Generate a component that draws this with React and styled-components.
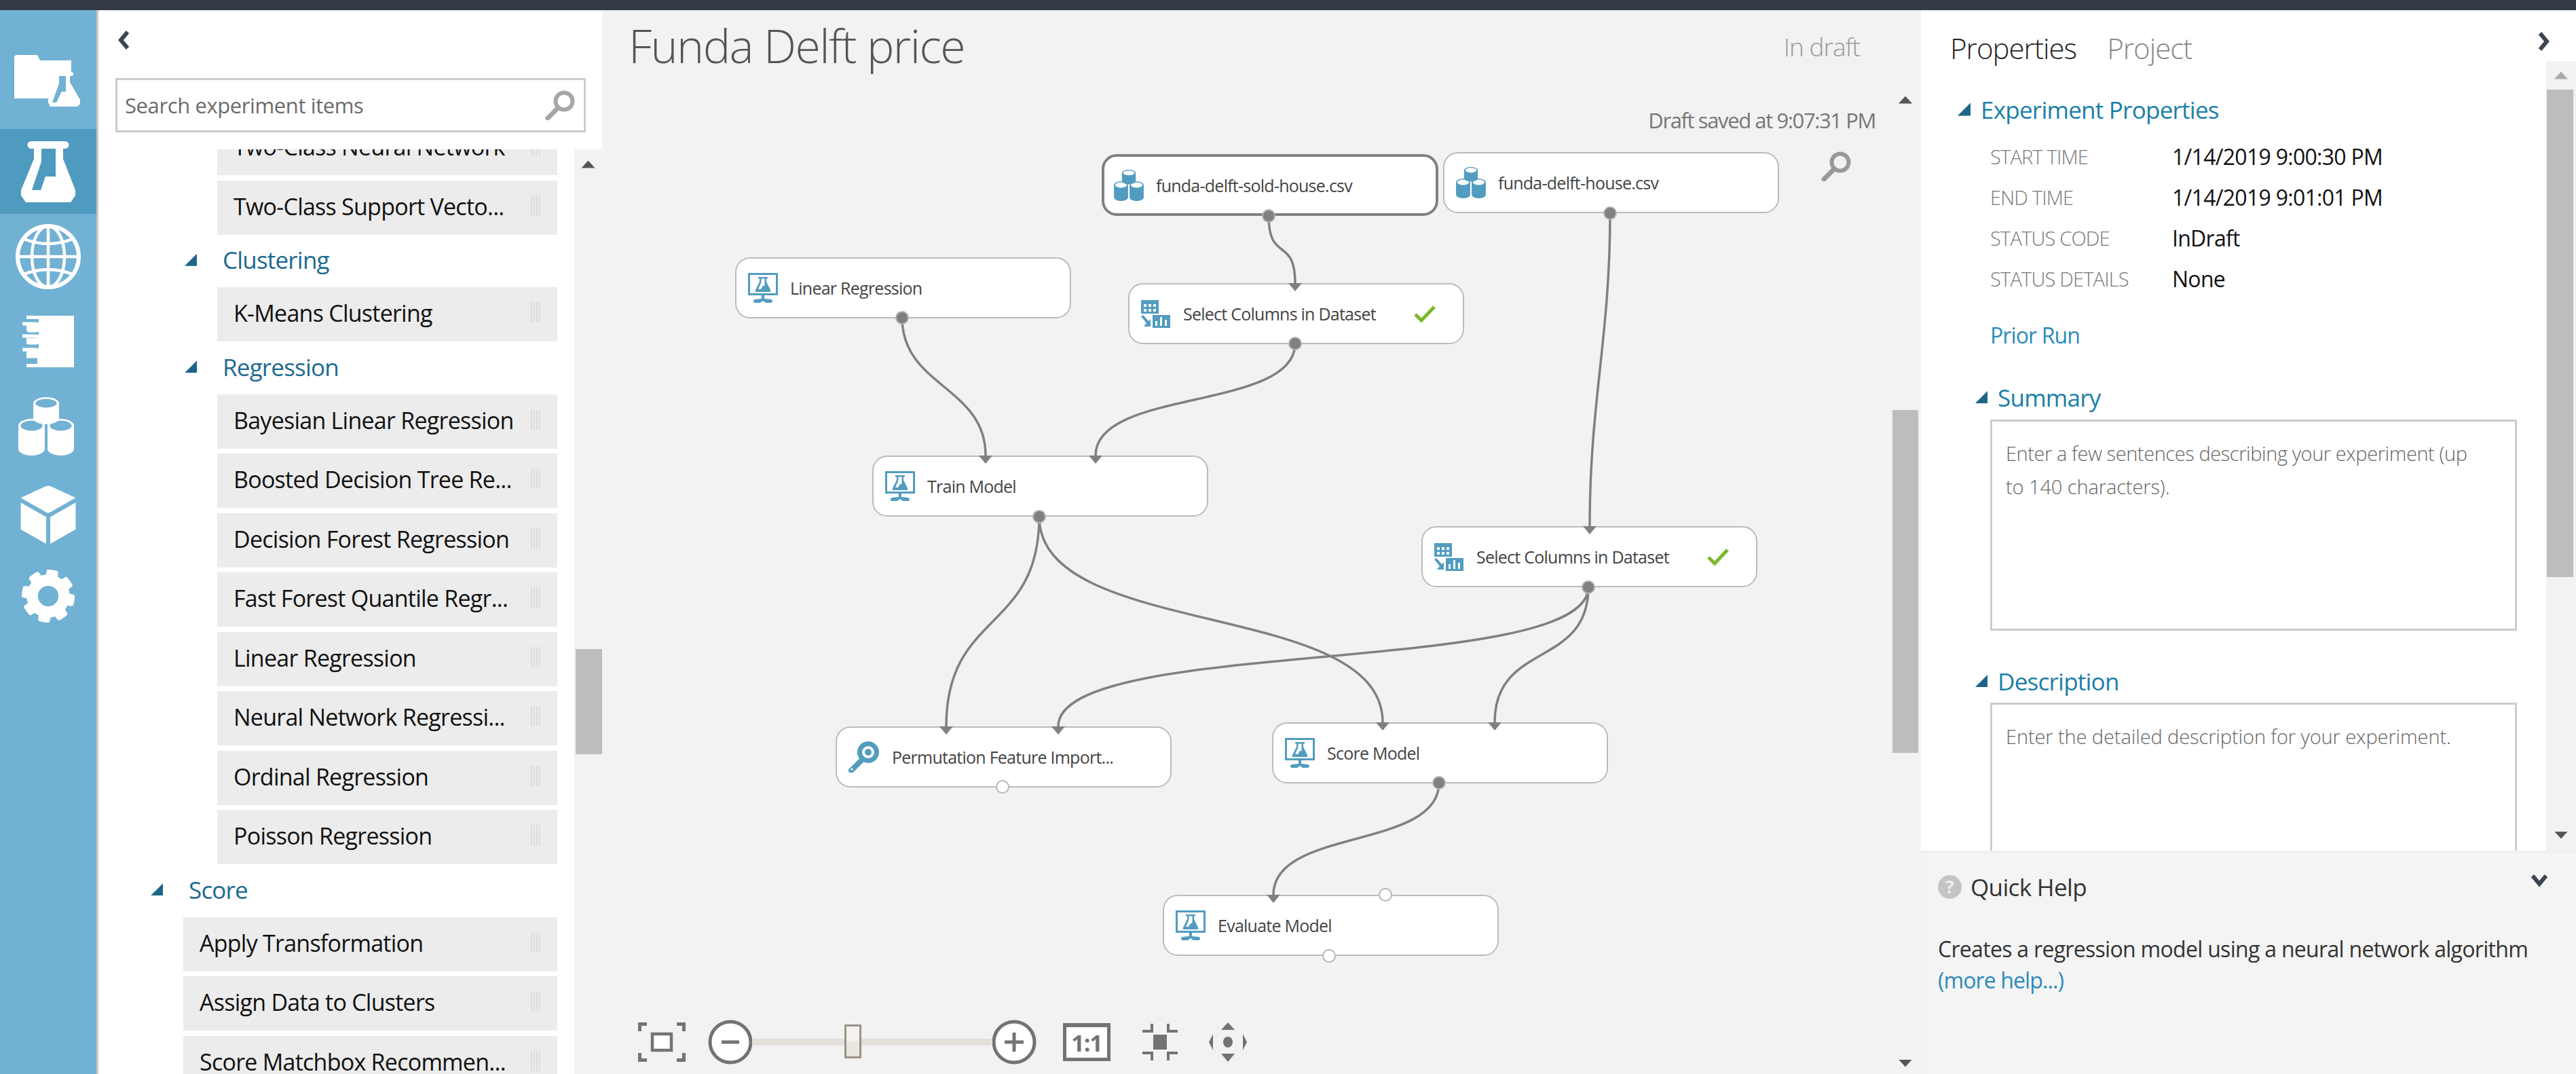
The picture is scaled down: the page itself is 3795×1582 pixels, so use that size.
import React from "react";
import styled, { createGlobalStyle } from "styled-components";

const FONT = `"Open Sans", "Noto Sans", "Liberation Sans", sans-serif`;

const Global = createGlobalStyle`
  html, body { margin: 0; padding: 0; background: #f2f2f2; }
  * { box-sizing: border-box; }
  body { font-family: ${FONT}; }
`;

const Page = styled.div`
  width: 3795px; height: 1582px; display: flex; flex-direction: column; overflow: hidden;
`;
const TopBar = styled.div`height: 15px; flex: none; background: #343a45;`;
const Main = styled.div`flex: 1; display: flex; min-height: 0;`;

/* Left nav */
const Nav = styled.nav`
  width: 145px; flex: none; background: #71b1d3; border-right: 3px solid #c6c6c6;
  padding-top: 50px; display: flex; flex-direction: column;
`;
const NavItem = styled.div`
  height: 125px; display: flex; align-items: center; justify-content: center;
  background: ${p => (p.$active ? "#4f9abf" : "transparent")};
  & > svg { display: block; transform: translate(${p => p.$dx || 0}px, ${p => p.$dy || 0}px); }
`;

/* Palette */
const Palette = styled.aside`
  width: 742px; flex: none; background: #fff; display: flex; flex-direction: column; min-height: 0;
`;
const PaletteHead = styled.div`height: 100px; flex: none; padding: 30px 0 0 27px;`;
const SearchBox = styled.div`
  height: 80px; width: 693px; margin-left: 25px; flex: none; border: 3px solid #ccc;
  display: flex; align-items: center; padding: 0 13px 0 11px; background: #fff;
`;
const SearchInput = styled.input`
  flex: 1; min-width: 0; border: 0; outline: 0; background: transparent; font-family: ${FONT};
  font-size: 31px; letter-spacing: -0.4px; color: #666; padding: 0;
  &::placeholder { color: #6b6b6b; opacity: 1; }
`;
const PaletteBody = styled.div`
  flex: 1; margin-top: 25px; display: flex; min-height: 0; overflow: hidden;
`;
const ListClip = styled.div`flex: 1; min-width: 0; overflow: hidden;`;
const List = styled.div`margin: -42px 25px 0 0; display: flex; flex-direction: column;`;
const Item = styled.div`
  height: 80px; flex: none; margin-bottom: 7.5px; margin-left: ${p => p.$indent}px; background: #ececec;
  display: flex; align-items: center; justify-content: space-between;
  padding: 0 25px 4px 24px; font-size: 34px; letter-spacing: -0.75px; color: #111; white-space: nowrap;
`;
const Grip = styled.span`
  width: 14px; height: 30px; flex: none; margin-top: -2px;
  background: repeating-linear-gradient(90deg, #dcdcdc 0 2px, #ececec 2px 4px);
`;
const GroupHead = styled.div`
  height: 77.5px; margin-top: -7.5px; padding-bottom: 3px; flex: none; display: flex; align-items: center; padding-left: ${p => p.$indent}px;
  font-size: 35px; letter-spacing: -0.8px; color: #1c6a90;
`;
const Tri = styled.span`
  width: ${p => p.$s || 18}px; height: ${p => p.$s || 18}px; flex: none; background: #1c6489;
  clip-path: polygon(100% 0, 100% 100%, 0 100%);
  margin-right: ${p => p.$gap}px;
`;

/* Scrollbars */
const Scroll = styled.div`
  width: ${p => p.$w}px; flex: none; background: #f2f2f2; display: flex; flex-direction: column;
  margin-top: ${p => p.$top || 0}px;
  min-height: 0;
`;
const ArrowCell = styled.div`
  height: ${p => p.$h}px; flex: none; display: flex; align-items: center; justify-content: center;
  padding-right: ${p => p.$pr || 0}px;
  margin-top: ${p => (p.$end ? "auto" : "0")};
`;
const Arrow = styled.span`
  width: 20px; height: 11px; background: ${p => p.$color || "#555"};
  clip-path: ${p => (p.$down ? "polygon(0 0, 100% 0, 50% 100%)" : "polygon(50% 0, 100% 100%, 0 100%)")};
`;
const Thumb = styled.div`
  height: ${p => p.$h}px; flex: none; background: #bdbdbd; margin-top: ${p => p.$top}px;
  margin-left: ${p => p.$l || 0}px; margin-right: ${p => p.$r || 0}px;
`;

/* Canvas */
const Canvas = styled.main`
  width: 1943px; flex: none; display: flex; background: #f2f2f2; min-height: 0;
`;
const Stage = styled.div`flex: 1; position: relative; overflow: hidden;`;
const TitleRow = styled.header`
  display: flex; justify-content: space-between; align-items: center;
  height: 70px; margin-top: 18px; padding: 0 48px 0 39px;
`;
const Title = styled.h1`
  margin: -4px 0 0; font-weight: 300; font-size: 68px; letter-spacing: -1.6px; color: #555;
`;
const Status = styled.span`font-size: 37px; font-weight: 300; letter-spacing: -1px; color: #999;`;
const Saved = styled.div`
  position: absolute; right: 25px; top: 141px; font-size: 31px; letter-spacing: -1.4px; color: #777;
`;
const CanvasSearch = styled.div`position: absolute; left: 1796px; top: 208px; line-height: 0;`;

const Wires = styled.svg`position: absolute; left: 0; top: 0; pointer-events: none;`;
const Node = styled.div`
  position: absolute; left: ${p => p.$x - 887}px; top: ${p => p.$y - 15}px;
  width: ${p => (p.$sel ? 496 : 495)}px; height: ${p => (p.$sel ? 91 : 90)}px;
  background: #fff; border-radius: 22px;
  border: ${p => (p.$sel ? "4px solid #808080" : "2px solid #bbb")};
  display: flex; align-items: center; padding-left: ${p => (p.$sel ? 14 : 17)}px;
  font-size: 25px; letter-spacing: -0.75px; color: #444; white-space: nowrap;
`;
const NodeLabel = styled.span`margin-left: 18px; flex: ${p => (p.$grow ? 1 : "none")};`;
const Check = styled.span`margin: 0 40px 0 0; line-height: 0; flex: none;`;

/* Canvas toolbar */
const Toolbar = styled.div`
  position: absolute; left: 53px; bottom: 14px; display: flex; align-items: center; height: 66px;
`;
const ToolIcon = styled.span`
  display: block; line-height: 0; flex: none; margin-left: ${p => p.$ml || 0}px;
`;
const SliderTrack = styled.div`
  width: 354px; height: 10px; flex: none; background: #e3dfd9; position: relative; margin: 0 -1px;
`;
const SliderThumb = styled.div`
  position: absolute; left: 136px; top: -21px; width: 25px; height: 50px; border: 3px solid #9a9288;
  background: linear-gradient(#f4f2ee 0 50%, #e9e5df 50% 100%);
`;
const OneToOne = styled.div`
  width: 70px; height: 56px; flex: none; margin-left: 39px; background: #fff; border: 5px solid #737373;
  border-top-width: 6px; display: flex; align-items: center; justify-content: center;
  font-size: 34px; font-weight: 700; letter-spacing: -1px; color: #737373; line-height: 1;
`;

/* Right panel */
const Panel = styled.section`
  flex: 1; min-width: 0; background: #fff; display: flex; flex-direction: column; min-height: 0; position: relative;
`;
const PropsArea = styled.div`height: 1238px; flex: none; display: flex; overflow: hidden;`;
const PropsContent = styled.div`flex: 1; min-width: 0; padding: 27px 0 0 43px; overflow: hidden;`;
const Tabs = styled.div`display: flex; gap: 45px; height: 60px; margin-top: -2px; margin-bottom: 2px; align-items: center;`;
const Tab = styled.span`
  font-size: 42px; font-weight: 300; letter-spacing: -1px; color: ${p => (p.$on ? "#222" : "#888")};
`;
const CollapseRight = styled.div`position: absolute; right: 37px; top: 32px; line-height: 0;`;
const SectionHead = styled.h3`
  margin: ${p => p.$mt}px 0 0 ${p => p.$ml}px; height: 50px; display: flex; align-items: center; padding-bottom: 2px;
  font-size: 35px; font-weight: 400; letter-spacing: -0.75px; color: #1a7fa8;
`;
const Rows = styled.dl`margin: 13px 0 0 59px; display: grid; grid-template-columns: 268px 1fr; grid-auto-rows: 60px; align-items: center;`;
const Label = styled.dt`font-size: 29px; font-weight: 300; letter-spacing: -0.8px; color: #777;`;
const Value = styled.dd`margin: 0; font-size: 32px; letter-spacing: -0.72px; color: #111;`;
const PriorRun = styled.a`
  display: block; margin: 29px 0 0 59px; height: 50px; line-height: 50px;
  font-size: 32px; letter-spacing: -0.9px; color: #2a8bbd;
`;
const TextBox = styled.div`
  margin: ${p => p.$mt}px 0 0 59px; width: 776px; height: ${p => p.$h}px; flex: none; border: 3px solid #ccc;
  padding: 22px 0 0 20px; font-size: 29px; font-weight: 300; line-height: 49px; letter-spacing: -0.1px; color: #666; white-space: nowrap;
`;
const TightLine = styled.span`letter-spacing: -0.42px;`;
const Help = styled.div`
  flex: 1; background: #f4f4f4; border-top: 3px solid #eee; padding: 0 0 0 25px; min-height: 0;
`;
const HelpHead = styled.div`display: flex; align-items: center; height: 50px; margin-top: 25px; color: #333; font-size: 35px; letter-spacing: -0.65px;`;
const HelpBadge = styled.span`
  width: 35px; height: 35px; border-radius: 50%; background: #c4c4c4; color: #eee; font-size: 26px; font-weight: 700;
  display: flex; align-items: center; justify-content: center; margin-right: 13px; letter-spacing: 0;
`;
const HelpChevron = styled.span`margin-left: auto; margin-right: 42px; line-height: 0; margin-top: -20px;`;
const HelpText = styled.p`
  margin: 44px 0 0; font-size: 32px; line-height: 46px; letter-spacing: -0.7px; color: #333;
`;
const HelpLink = styled.a`color: #2a8bbd; display: block; letter-spacing: -0.9px;`;

/* icons */
const cyl = (x, y, w, h, r) =>
  `M${x} ${y + r}a${w / 2} ${r} 0 0 1 ${w} 0V${y + h - r}a${w / 2} ${r} 0 0 1 ${-w} 0Z` +
  `M${x + 3.5} ${y + r}a${w / 2 - 3.5} ${r - 2.5} 0 1 0 ${w - 7} 0a${w / 2 - 3.5} ${r - 2.5} 0 1 0 ${-(w - 7)} 0Z`;

const FLASK = "M15 0H65a5 5 0 0 1 0 11H62V26L80 72V80L73 90H7L0 80V72L19 26V11H15A5 5 0 0 1 15 0ZM30 11V30L16 72H29L36 52H51V11Z";

const FolderFlask = () => (
  <svg width="98" height="78" viewBox="0 0 98 78" fill="#fff">
    <path d="M0 6a4 4 0 0 1 4-4H34l4 8H84V28H66L52 66H0Z" />
    <path fillRule="evenodd" d="M58 27H84a3 3 0 0 1 0 6H82V42L97 68V74L93 78H53L50 72V68L60 42V33H58A3 3 0 0 1 58 27ZM66 33V44L56 72H62L70 56H76V33Z" />
  </svg>
);
const FlaskIcon = () => (
  <svg width="80" height="90" viewBox="0 0 80 90" fill="#fff"><path fillRule="evenodd" d={FLASK} /></svg>
);
const Globe = () => (
  <svg width="96" height="96" viewBox="0 0 96 96" fill="none" stroke="#fff" strokeWidth="4.5">
    <circle cx="48" cy="48" r="45" strokeWidth="6" />
    <ellipse cx="48" cy="48" rx="24" ry="45" />
    <path d="M48 3V93M3 48H93M12 22Q48 36 84 22M12 74Q48 60 84 74" />
  </svg>
);
const Notebook = () => (
  <svg width="76" height="76" viewBox="0 0 76 76" fill="#fff">
    <path d="M6 0H76V76H6V71H22V62H6V52H24V42H6V33H24V23H6V14H24V5H6Z" />
    <path d="M0 12H20a4 4 0 0 1 0 10H8M0 30H20a4 4 0 0 1 0 10H8M0 50H20a4 4 0 0 1 0 10H6" fill="none" stroke="#fff" strokeWidth="5" />
  </svg>
);
const Datasets = ({ w = 82, h = 86, color = "#fff" }) => (
  <svg width={w} height={h} viewBox="0 0 82 86" fill={color}>
    <path fillRule="evenodd" d={cyl(22, 0, 38, 40, 9)} />
    <path fillRule="evenodd" d={cyl(0, 32, 39, 54, 10)} />
    <path fillRule="evenodd" d={cyl(43, 32, 39, 54, 10)} />
  </svg>
);
const Cube = () => (
  <svg width="82" height="86" viewBox="0 0 80 85" fill="#fff">
    <path d="M37 1Q40 0 43 1L80 18L43 39Q40 41 37 39L0 18Z" />
    <path d="M0 25L37 46V85L0 64ZM80 25L43 46V85L80 64Z" />
  </svg>
);
const Gear = () => (
  <svg width="78" height="78" viewBox="0 0 80 80" fill="#fff">
    <circle cx="40" cy="40" r="24" fill="none" stroke="#fff" strokeWidth="17" />
    {[0, 1, 2, 3, 4, 5, 6, 7].map(i => (
      <rect key={i} x="31" y="0" width="18" height="16" rx="4" transform={`rotate(${10 + i * 45} 40 40)`} />
    ))}
  </svg>
);
const MonitorFlask = () => (
  <svg width="44" height="44" viewBox="0 0 44 44" fill="#529cc0">
    <path fillRule="evenodd" d="M0 0H44V33H0ZM3 3V30H41V3Z" />
    <path fillRule="evenodd" d="M15 6H29V8.5H27V13L33 25V28H11V25L17 13V8.5H15ZM19.5 8.5V14L15 24H19L22 19H24.5V8.5Z" />
    <path d="M20 33H24V38L34 39Q36 40 36 41.5T34 44H26L22 41L18 44H10Q8 44 8 41.5T10 39L20 38Z" />
  </svg>
);
const SelectCols = () => (
  <svg width="44" height="41" viewBox="0 0 44 41" fill="#529cc0">
    <path fillRule="evenodd" d="M0 0H26V20H0ZM4 6V10H8V6ZM11 6V10H15V6ZM18 6V10H22V6ZM4 13V17H8V13ZM11 13V17H15V13ZM18 13V17H22V13Z" />
    <path fillRule="evenodd" d="M17 22H43V41H17ZM21 31V38H24V31ZM28 25V38H31V25ZM35 29V38H38V29Z" />
    <path d="M0 24L3 22L11 31L14 28V39H4L8 34Z" />
  </svg>
);
const Perm = () => (
  <svg width="46" height="46" viewBox="0 0 46 46" fill="none">
    <circle cx="29" cy="16" r="12.5" stroke="#529cc0" strokeWidth="7" />
    <circle cx="29" cy="16" r="5" fill="#529cc0" />
    <path d="M20 27L4 43" stroke="#529cc0" strokeWidth="8" strokeLinecap="round" />
    <circle cx="5" cy="41" r="1.6" fill="#fff" />
  </svg>
);
const Magnifier = ({ color }) => (
  <svg width="44" height="44" viewBox="0 0 44 44" fill="none" stroke={color}>
    <circle cx="28" cy="16" r="12.5" strokeWidth="6" />
    <path d="M18 27L4 41" strokeWidth="7" strokeLinecap="round" />
  </svg>
);
const CheckMark = () => (
  <svg width="32" height="26" viewBox="0 0 32 26" fill="none" stroke="#7ab829" strokeWidth="5"><path d="M2 14L11 23L30 3" /></svg>
);
const Chev = ({ dir }) => {
  const d = { left: "M16 2L6 14L16 26", right: "M4 2L14 14L4 26", down: "M2 4L12 16L22 4" }[dir];
  return (
    <svg width={dir === "down" ? 24 : 20} height={dir === "down" ? 20 : 28} fill="none" stroke="#3d4550" strokeWidth="6"><path d={d} /></svg>
  );
};

/* toolbar drawings */
const FitIcon = () => (
  <svg width="70" height="58" viewBox="0 0 70 58" fill="none" stroke="#737373" strokeWidth="5">
    <path d="M2.5 13V2.5H13M67.5 13V2.5H57M2.5 45V55.5H13M67.5 45V55.5H57" />
    <rect x="21" y="17" width="28" height="24" strokeWidth="4.5" fill="#fff" />
  </svg>
);
const RoundBtn = ({ plus }) => (
  <svg width="66" height="66" viewBox="0 0 66 66">
    <circle cx="33" cy="33" r="30" fill="#fff" stroke="#737373" strokeWidth="5" />
    <path d={plus ? "M19 33H47M33 19V47" : "M20 33H46"} stroke="#737373" strokeWidth="5" />
  </svg>
);
const CenterIcon = () => (
  <svg width="56" height="58" viewBox="0 0 56 58" fill="#737373">
    <rect x="18" y="18" width="20" height="22" />
    <path d="M16 2V13H2M40 2V13H54M16 56V45H2M40 56V45H54" fill="none" stroke="#737373" strokeWidth="4" />
  </svg>
);
const MoveIcon = () => (
  <svg width="56" height="58" viewBox="0 0 56 58" fill="#737373">
    <path d="M28 0L38 11H18ZM28 58L18 46H38ZM0 29L6 17V41ZM56 29L50 17V41Z" />
    <ellipse cx="28" cy="29" rx="7" ry="8" />
  </svg>
);

/* data */
const groups = [
  { items: ["Two-Class Neural Network", "Two-Class Support Vecto..."], indent: 175 },
  { head: "Clustering", hi: 127, items: ["K-Means Clustering"], indent: 175 },
  { head: "Regression", hi: 127, items: ["Bayesian Linear Regression", "Boosted Decision Tree Re...", "Decision Forest Regression", "Fast Forest Quantile Regr...", "Linear Regression", "Neural Network Regressi...", "Ordinal Regression", "Poisson Regression"], indent: 175 },
  { head: "Score", hi: 77, items: ["Apply Transformation", "Assign Data to Clusters", "Score Matchbox Recommen..."], indent: 125 },
];

const nodes = [
  { x: 1083, y: 379, label: "Linear Regression", icon: MonitorFlask },
  { x: 1623, y: 227, label: "funda-delft-sold-house.csv", icon: Datasets, sel: true },
  { x: 2126, y: 224, label: "funda-delft-house.csv", icon: Datasets },
  { x: 1662, y: 417, label: "Select Columns in Dataset", icon: SelectCols, ok: true },
  { x: 1285, y: 671, label: "Train Model", icon: MonitorFlask },
  { x: 2094, y: 775, label: "Select Columns in Dataset", icon: SelectCols, ok: true },
  { x: 1231, y: 1070, label: "Permutation Feature Import...", icon: Perm },
  { x: 1874, y: 1064, label: "Score Model", icon: MonitorFlask },
  { x: 1713, y: 1318, label: "Evaluate Model", icon: MonitorFlask },
];

const curve = (x1, y1, x2, y2, k = 0.5) => {
  const dy = (y2 - y1) * k;
  return `M${x1} ${y1}C${x1} ${y1 + dy} ${x2} ${y2 - dy} ${x2} ${y2}`;
};
const wires = [
  curve(1869, 318, 1908, 417, 0.7),
  curve(1329, 468, 1452, 671),
  curve(1908, 506, 1614, 671, 0.6),
  curve(2372, 314, 2342, 775, 0.4),
  curve(1531, 761, 1394, 1070, 0.55),
  curve(1531, 761, 2037, 1064, 0.6),
  curve(2340, 865, 1559, 1070, 0.65),
  curve(2340, 865, 2202, 1064, 0.6),
  curve(2120, 1153, 1876, 1318, 0.6),
];
const inputs = [[1908, 417], [1452, 671], [1614, 671], [2342, 775], [1394, 1070], [1559, 1070], [2037, 1064], [2202, 1064], [1876, 1318]];
const outs = [[1329, 468], [1869, 318], [2372, 314], [1908, 506], [1531, 761], [2340, 865], [2120, 1153]];
const opens = [[1477, 1159], [2041, 1318], [1958, 1408]];

const VB = "887 15 1901 1567";

export default function App() {
  return (
    <Page>
      <Global />
      <TopBar />
      <Main>
        <Nav>
          <NavItem $dy={-10} $dx={-1}><FolderFlask /></NavItem>
          <NavItem $active><FlaskIcon /></NavItem>
          <NavItem><Globe /></NavItem>
          <NavItem><Notebook /></NavItem>
          <NavItem $dx={-3}><Datasets /></NavItem>
          <NavItem $dy={5}><Cube /></NavItem>
          <NavItem><Gear /></NavItem>
        </Nav>

        <Palette>
          <PaletteHead><Chev dir="left" /></PaletteHead>
          <SearchBox>
            <SearchInput placeholder="Search experiment items" readOnly />
            <Magnifier color="#a6a6a6" />
          </SearchBox>
          <PaletteBody>
            <ListClip>
              <List>
                {groups.map((g, i) => (
                  <React.Fragment key={i}>
                    {g.head && (
                      <GroupHead $indent={g.hi}>
                        <Tri $gap={38} />
                        {g.head}
                      </GroupHead>
                    )}
                    {g.items.map(t => (
                      <Item key={t} $indent={g.indent}>{t}<Grip /></Item>
                    ))}
                  </React.Fragment>
                ))}
              </List>
            </ListClip>
            <Scroll $w={41}>
              <ArrowCell $h={44}><Arrow /></ArrowCell>
              <Thumb $h={155} $top={692} $l={2} />
            </Scroll>
          </PaletteBody>
        </Palette>

        <Canvas>
          <Stage>
            <TitleRow>
              <Title>Funda Delft price</Title>
              <Status>In draft</Status>
            </TitleRow>
            <Saved>Draft saved at 9:07:31 PM</Saved>
            <CanvasSearch><Magnifier color="#999" /></CanvasSearch>
            <Wires width="1901" height="1567" viewBox={VB} fill="none" stroke="#808080" strokeWidth="3.5">
              {wires.map(d => <path key={d} d={d} />)}
            </Wires>
            {nodes.map(n => {
              const Icon = n.icon;
              return (
                <Node key={n.x} $x={n.x} $y={n.y} $sel={n.sel}>
                  {Icon === Datasets ? <Datasets w={44} h={46} color="#529cc0" /> : <Icon />}
                  <NodeLabel $grow={n.ok}>{n.label}</NodeLabel>
                  {n.ok && <Check><CheckMark /></Check>}
                </Node>
              );
            })}
            <Wires width="1901" height="1567" viewBox={VB}>
              {inputs.map(([x, y]) => <path key={`${x}-${y}`} d={`M${x - 10} ${y}h20l-10 12z`} fill="#808080" />)}
              {outs.map(([x, y]) => <circle key={`${x}-${y}`} cx={x} cy={y} r="9" fill="#808080" stroke="#b5b5b5" strokeWidth="2" />)}
              {opens.map(([x, y]) => <circle key={`${x}-${y}`} cx={x} cy={y} r="9" fill="#fff" stroke="#b5b5b5" strokeWidth="2" />)}
            </Wires>
            <Toolbar>
              <ToolIcon><FitIcon /></ToolIcon>
              <ToolIcon $ml={33}><RoundBtn /></ToolIcon>
              <SliderTrack><SliderThumb /></SliderTrack>
              <ToolIcon><RoundBtn plus /></ToolIcon>
              <OneToOne>1:1</OneToOne>
              <ToolIcon $ml={45}><CenterIcon /></ToolIcon>
              <ToolIcon $ml={44}><MoveIcon /></ToolIcon>
            </Toolbar>
          </Stage>
          <Scroll $w={42}>
            <ArrowCell $h={264} $pr={4}><Arrow /></ArrowCell>
            <Thumb $h={505} $top={325} $r={4} />
            <ArrowCell $h={32} $pr={4} $end><Arrow $down /></ArrowCell>
          </Scroll>
        </Canvas>

        <Panel>
          <CollapseRight><Chev dir="right" /></CollapseRight>
          <PropsArea>
            <PropsContent>
              <Tabs>
                <Tab $on>Properties</Tab>
                <Tab>Project</Tab>
              </Tabs>
              <SectionHead $mt={37} $ml={11}><Tri $s={19} $gap={15} />Experiment Properties</SectionHead>
              <Rows>
                <Label>START TIME</Label><Value>1/14/2019 9:00:30 PM</Value>
                <Label>END TIME</Label><Value>1/14/2019 9:01:01 PM</Value>
                <Label>STATUS CODE</Label><Value>InDraft</Value>
                <Label>STATUS DETAILS</Label><Value>None</Value>
              </Rows>
              <PriorRun>Prior Run</PriorRun>
              <SectionHead $mt={42} $ml={37}><Tri $s={18} $gap={15} />Summary</SectionHead>
              <TextBox $mt={7} $h={311}>
                <TightLine>Enter a few sentences describing your experiment (up</TightLine><br />to 140 characters).
              </TextBox>
              <SectionHead $mt={50} $ml={37}><Tri $s={18} $gap={15} />Description</SectionHead>
              <TextBox $mt={6} $h={300}>Enter the detailed description for your experiment.</TextBox>
            </PropsContent>
            <Scroll $w={44} $top={75}>
              <ArrowCell $h={42}><Arrow $color="#aaa" /></ArrowCell>
              <Thumb $h={718} $top={0} $l={1} $r={4} />
              <ArrowCell $h={46} $end><Arrow $down /></ArrowCell>
            </Scroll>
          </PropsArea>
          <Help>
            <HelpHead>
              <HelpBadge>?</HelpBadge>Quick Help
              <HelpChevron><Chev dir="down" /></HelpChevron>
            </HelpHead>
            <HelpText>
              Creates a regression model using a neural network algorithm
              <HelpLink>(more help...)</HelpLink>
            </HelpText>
          </Help>
        </Panel>
      </Main>
    </Page>
  );
}
